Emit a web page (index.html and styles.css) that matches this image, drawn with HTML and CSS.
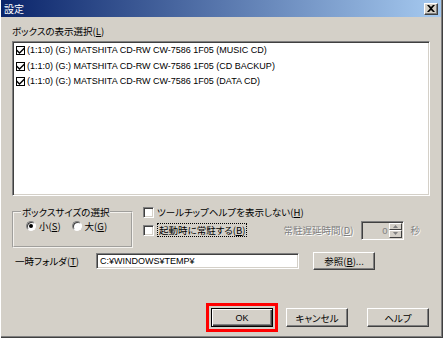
FILE: index.html
```html
<!DOCTYPE html>
<html lang="ja">
<head>
<meta charset="utf-8">
<title>設定</title>
<link rel="stylesheet" href="styles.css">
</head>
<body>
<div class="window">
  <div class="titlebar">
    <span class="title">設定</span>
    <span class="close"><svg width="8" height="7" viewBox="0 0 8 7"><path d="M0 0h2l2 2 2-2h2L5 3.5 8 7H6L4 5 2 7H0l3-3.5z" fill="#000"/></svg></span>
  </div>
  <div class="body">
    <div class="label">ボックスの表示選択(<u>L</u>)</div>
    <div class="listbox">
      <div class="item"><span class="lcb"><svg viewBox="0 0 7 7" width="7" height="7"><path d="M0 2.5l2.5 2.5L7 0.5v2L2.5 7 0 4.5z" fill="#000"/></svg></span>(1:1:0) (G:) MATSHITA CD-RW CW-7586 1F05 (MUSIC CD)</div>
      <div class="item"><span class="lcb"><svg viewBox="0 0 7 7" width="7" height="7"><path d="M0 2.5l2.5 2.5L7 0.5v2L2.5 7 0 4.5z" fill="#000"/></svg></span>(1:1:0) (G:) MATSHITA CD-RW CW-7586 1F05 (CD BACKUP)</div>
      <div class="item"><span class="lcb"><svg viewBox="0 0 7 7" width="7" height="7"><path d="M0 2.5l2.5 2.5L7 0.5v2L2.5 7 0 4.5z" fill="#000"/></svg></span>(1:1:0) (G:) MATSHITA CD-RW CW-7586 1F05 (DATA CD)</div>
    </div>
    <div class="options">
      <fieldset class="group">
        <legend>ボックスサイズの選択</legend>
        <div class="radios">
          <span class="radio-item"><span class="radio checked"></span>小(<u>S</u>)</span>
          <span class="radio-item"><span class="radio"></span>大(<u>G</u>)</span>
        </div>
      </fieldset>
      <div class="checks">
        <div class="check-row"><span class="cb"></span>ツールチップヘルプを表示しない(<u>H</u>)</div>
        <div class="check-row row2">
          <span class="cb"></span><span class="focus">起動時に常駐する(<u>B</u>)</span>
          <span class="disabled delay">常駐遅延時間(<u>D</u>)</span>
          <span class="spin"><span class="spin-edit">0</span><span class="spin-btns"><span class="sbtn"><svg width="5" height="3" viewBox="0 0 5 3"><path d="M2.5 0L5 3H0z" fill="#808080"/></svg></span><span class="sbtn"><svg width="5" height="3" viewBox="0 0 5 3"><path d="M0 0h5L2.5 3z" fill="#808080"/></svg></span></span></span>
          <span class="disabled sec">秒</span>
        </div>
      </div>
    </div>
    <div class="folder-row">
      <span class="folder-label">一時フォルダ(<u>T</u>)</span>
      <span class="textbox">C:¥WINDOWS¥TEMP¥</span>
      <span class="btn browse">参照(<u>B</u>)...</span>
    </div>
    <div class="buttons">
      <span class="btn default ok">OK</span>
      <span class="btn cancel">キャンセル</span>
      <span class="btn help">ヘルプ</span>
    </div>
  </div>
</div>
</body>
</html>
```
FILE: styles.css
```css
* { box-sizing: border-box; }
html, body { margin: 0; padding: 0; background: #d4d0c8; }
body {
  font-family: "Liberation Sans", "Noto Sans CJK JP", sans-serif;
  font-size: 9.5px;
  color: #000;
  font-feature-settings: "palt";
}
u { text-decoration: underline; text-underline-offset: 1px; }
.window {
  width: 443px;
  height: 338px;
  background: #d4d0c8;
  padding: 0 2px 2px 1px;
  box-shadow: inset 1px 0 0 #ffffff, inset -1px -1px 0 #404040, inset -2px -2px 0 #808080;
  display: flex;
  flex-direction: column;
}
.titlebar {
  height: 17px;
  background: linear-gradient(to right, #0a246a 0%, #a6caf0 100%);
  display: flex;
  align-items: center;
  justify-content: space-between;
  padding: 0 3px 0 3px;
}
.title {
  color: #fff;
  font-family: "Noto Sans CJK JP", sans-serif;
  font-size: 10px;
  line-height: 12px;
}
.close {
  width: 14px;
  height: 12px;
  background: #d4d0c8;
  border-top: 1px solid #fff;
  border-left: 1px solid #fff;
  border-right: 1px solid #404040;
  border-bottom: 1px solid #404040;
  box-shadow: inset -1px -1px 0 #808080;
  display: flex;
  align-items: center;
  justify-content: center;
}
.close svg { display: block; margin: 0 1px 1px 0; }
.body {
  flex: 1;
  display: flex;
  flex-direction: column;
  padding: 0 11px 0 11px;
}
.label {
  margin-top: 7px;
  height: 14px;
  line-height: 14px;
  font-family: "Noto Sans CJK JP", sans-serif;
}
.listbox {
  margin-top: 3px;
  height: 155px;
  width: 418px;
  background: #fff;
  border-top: 1px solid #808080;
  border-left: 1px solid #808080;
  border-right: 1px solid #fff;
  border-bottom: 1px solid #fff;
  box-shadow: inset 1px 1px 0 #404040, inset -1px -1px 0 #d4d0c8;
  padding: 1px 2px;
  font-size: 9px;
}
.item {
  height: 15.5px;
  line-height: 15px;
  display: flex;
  align-items: center;
  white-space: nowrap;
}
.lcb {
  width: 9px;
  height: 9px;
  border: 1px solid #000;
  margin: 0 2px 0 1px;
  display: flex;
  align-items: center;
  justify-content: center;
  background: #fff;
}
.lcb svg { display: block; }
.options {
  margin-top: 10px;
  display: flex;
  align-items: flex-start;
}
.group {
  margin: 0;
  width: 121px;
  height: 42px;
  padding: 1px 0 0 12px;
  border: 2px groove #f4f2ee;
  font-family: "Noto Sans CJK JP", sans-serif;
  white-space: nowrap;
}
.group legend {
  padding: 0 1px;
  margin-left: -5px;
  line-height: 12px;
  height: 12px;
}
.radios {
  display: flex;
  height: 14px;
  align-items: center;
}
.radio-item {
  display: flex;
  align-items: center;
  margin-right: 11px;
  white-space: nowrap;
}
.radio {
  width: 10px;
  height: 10px;
  border-radius: 50%;
  background: #fff;
  border: 1px solid;
  border-color: #808080 #fff #fff #808080;
  box-shadow: inset 1px 1px 0 #404040;
  margin-right: 3px;
  position: relative;
  flex: none;
}
.radio.checked::after {
  content: "";
  position: absolute;
  left: 2px;
  top: 2px;
  width: 4px;
  height: 4px;
  border-radius: 50%;
  background: #000;
}
.checks {
  margin-left: 10px;
  width: 277px;
  display: flex;
  flex-direction: column;
  gap: 2px;
  font-family: "Noto Sans CJK JP", sans-serif;
}
.check-row {
  display: flex;
  align-items: center;
  height: 12px;
  white-space: nowrap;
}
.check-row.row2 { height: 20px; }
.cb {
  width: 11px;
  height: 11px;
  background: #fff;
  border: 1px solid;
  border-color: #808080 #fff #fff #808080;
  box-shadow: inset 1px 1px 0 #404040, inset -1px -1px 0 #d4d0c8;
  margin-right: 3px;
  flex: none;
}
.focus {
  border: 1px dotted #000;
  padding: 0 1px;
  line-height: 12px;
}
.disabled {
  color: #808080;
  text-shadow: 1px 1px 0 #fff;
}
.delay { margin-left: auto; }
.spin {
  margin-left: 8px;
  width: 43px;
  height: 19px;
  display: flex;
  flex: none;
  background: #d4d0c8;
  border: 1px solid;
  border-color: #808080 #fff #fff #808080;
  box-shadow: inset 1px 1px 0 #404040, inset -1px -1px 0 #d4d0c8;
  padding: 1px;
}
.spin-edit {
  flex: 1;
  text-align: right;
  color: #808080;
  font-family: "Liberation Sans", sans-serif;
  line-height: 15px;
  padding-right: 2px;
}
.spin-btns {
  width: 13px;
  display: flex;
  flex-direction: column;
}
.sbtn {
  flex: 1;
  background: #d4d0c8;
  border-top: 1px solid #fff;
  border-left: 1px solid #fff;
  border-right: 1px solid #404040;
  border-bottom: 1px solid #404040;
  display: flex;
  align-items: center;
  justify-content: center;
}
.sbtn svg { display: block; }
.sec { margin-left: 6px; }
.folder-row {
  margin-top: 4px;
  height: 18px;
  display: flex;
  align-items: center;
  font-family: "Noto Sans CJK JP", sans-serif;
}
.folder-label { margin-left: 3px; width: 81px; }
.textbox {
  width: 203px;
  height: 16px;
  background: #fff;
  border: 1px solid;
  border-color: #808080 #fff #fff #808080;
  box-shadow: inset 1px 1px 0 #404040, inset -1px -1px 0 #d4d0c8;
  font-family: "Liberation Sans", sans-serif;
  font-size: 9px;
  line-height: 14px;
  padding-left: 3px;
}
.btn {
  display: flex;
  align-items: center;
  justify-content: center;
  height: 18px;
  background: #d4d0c8;
  border-top: 1px solid #fff;
  border-left: 1px solid #fff;
  border-right: 1px solid #404040;
  border-bottom: 1px solid #404040;
  box-shadow: inset -1px -1px 0 #808080;
  font-family: "Noto Sans CJK JP", sans-serif;
  line-height: 12px;
}
.browse { margin-left: 14px; width: 62px; }
.buttons {
  margin-top: 38px;
  display: flex;
  padding-left: 199px;
}
.buttons .btn { width: 62px; height: 19px; }
.btn.default {
  border: 1px solid #000;
  box-shadow: inset 1px 1px 0 #fff, inset -1px -1px 0 #404040, inset -2px -2px 0 #808080;
  outline: 3px solid #f00;
  outline-offset: 2px;
  font-family: "Liberation Sans", sans-serif;
  font-size: 9px;
}
.cancel { margin-left: 13px; }
.help { margin-left: 19px; }
```
